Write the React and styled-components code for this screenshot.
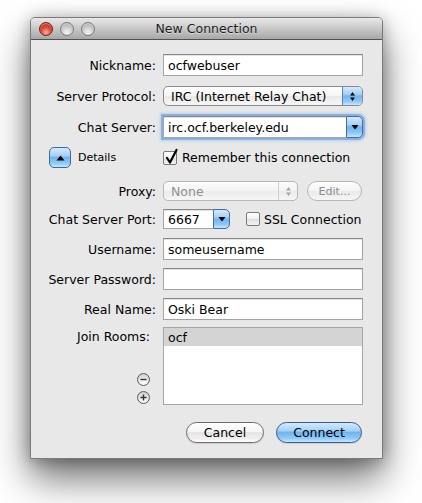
import React from 'react';
import styled, { createGlobalStyle } from 'styled-components';

const Global = createGlobalStyle`
  html, body { margin: 0; padding: 0; background: #fff; }
  body { font-family: "DejaVu Sans", "Liberation Sans", sans-serif; font-size: 12.5px; color: #000; }
`;

const Page = styled.div`
  padding: 17px 0 0 30px;
  height: 503px;
  box-sizing: border-box;
`;

const Window = styled.div`
  width: 353px;
  height: 442px;
  box-sizing: border-box;
  border: 1px solid #7a7a7a;
  border-radius: 5px 5px 0 0;
  background: #e8e8e8;
  box-shadow: 0 20px 38px rgba(0, 0, 0, 0.55), 0 2px 16px rgba(0, 0, 0, 0.3);
  display: flex;
  flex-direction: column;
`;

const TitleBar = styled.div`
  height: 21px;
  border-bottom: 1px solid #515151;
  border-radius: 4px 4px 0 0;
  background: linear-gradient(#e9e9e9, #a7a7a7);
  display: grid;
  grid-template-columns: 1fr auto 1fr;
  align-items: center;
`;

const Lights = styled.div`
  display: flex;
  gap: 7px;
  padding-left: 8px;
`;

const Light = styled.span`
  width: 14px;
  height: 14px;
  border-radius: 50%;
  box-sizing: border-box;
  border: 1px solid ${p => (p.$red ? '#7a1d15' : '#7c7c7c')};
  background: ${p =>
    p.$red
      ? 'radial-gradient(circle at 50% 78%, #fbb3a6 0%, #e0523f 40%, #a8180c 100%)'
      : 'radial-gradient(circle at 50% 78%, #f4f4f4 0%, #cfcfcf 45%, #9b9b9b 100%)'};
  box-shadow: inset 0 1px 1px rgba(255, 255, 255, 0.5);
`;

const Title = styled.div`
  font-size: 12.5px;
  color: #1c1c1c;
  text-shadow: 0 1px 0 rgba(255, 255, 255, 0.45);
`;

const Body = styled.div`
  padding: 14px 19px 0 10px;
  display: flex;
  flex-direction: column;
`;

const Row = styled.div`
  display: grid;
  grid-template-columns: 115px 200px;
  column-gap: 7px;
  align-items: ${p => (p.$top ? 'stretch' : 'center')};
  height: ${p => p.$h}px;
  margin-top: ${p => p.$mt || 0}px;
`;

const Label = styled.div`
  text-align: right;
  white-space: nowrap;
`;

const TextField = styled.div`
  height: 22px;
  box-sizing: border-box;
  border: 1px solid #a4a4a4;
  border-top-color: #868686;
  background: #fff;
  box-shadow: inset 0 1px 0 #e4e4e4;
  padding: 0 4px;
  display: flex;
  align-items: center;
  white-space: nowrap;
`;

const aqua = 'linear-gradient(#d3e9fc 0%, #a5d1f6 40%, #74b4ee 50%, #8ccaf8 80%, #c6e8fe 100%)';

const Popup = styled.div`
  height: 20px;
  width: ${p => p.$w}px;
  box-sizing: border-box;
  border: 1px solid ${p => (p.$disabled ? '#b8b8b8' : '#8a8a8a')};
  border-radius: 5px;
  background: ${p =>
    p.$disabled
      ? 'linear-gradient(#fbfbfb, #f3f3f3 50%, #ebebeb 51%, #f6f6f6)'
      : 'linear-gradient(#ffffff, #f5f5f5 50%, #e8e8e8 51%, #f7f7f7)'};
  color: ${p => (p.$disabled ? '#909090' : '#000')};
  display: flex;
  align-items: stretch;
  overflow: hidden;
`;

const PopupText = styled.div`
  flex: 1;
  display: flex;
  align-items: center;
  padding-left: 7px;
  white-space: nowrap;
`;

const PopupArrows = styled.div`
  width: ${p => p.$w}px;
  display: flex;
  align-items: center;
  justify-content: center;
  background: ${p => (p.$blue ? aqua : 'transparent')};
  border-left: 1px solid ${p => (p.$blue ? '#5a82b4' : '#cfcfcf')};
`;

const Combo = styled.div`
  height: ${p => p.$h}px;
  width: ${p => p.$w}px;
  display: flex;
  box-sizing: border-box;
  border-radius: 0 5px 5px 0;
  box-shadow: ${p => (p.$focus ? '0 0 0 2px rgba(118, 164, 222, 0.75), 0 0 3px 3px rgba(140, 185, 235, 0.5)' : 'none')};
`;

const ComboField = styled(TextField)`
  flex: 1;
  height: 100%;
  border-right: none;
`;

const ComboButton = styled.div`
  width: ${p => p.$w}px;
  box-sizing: border-box;
  border: 1px solid #4a6c9c;
  border-radius: 0 5px 5px 0;
  background: ${aqua};
  display: flex;
  align-items: center;
  justify-content: center;
`;

const Flex = styled.div`
  display: flex;
  align-items: center;
  gap: ${p => p.$gap || 0}px;
`;

const DetailsCell = styled.div`
  display: flex;
  align-items: center;
  padding-left: 8px;
  gap: 7px;
  height: 100%;
`;

const Disclosure = styled.div`
  width: 22px;
  height: 21px;
  box-sizing: border-box;
  border: 1px solid #46679a;
  border-radius: 5px;
  background: ${aqua};
  display: flex;
  align-items: center;
  justify-content: center;
`;

const SmallText = styled.span`
  font-size: 11px;
`;

const CheckWrap = styled.label`
  display: flex;
  align-items: center;
  gap: ${p => p.$gap}px;
  white-space: nowrap;
`;

const Box = styled.span`
  position: relative;
  width: 14px;
  height: 14px;
  box-sizing: border-box;
  border: 1px solid #7a7a7a;
  border-radius: 2px;
  background: linear-gradient(#ffffff, #f0f0f0 50%, #dedede 51%, #f4f4f4);
  flex: none;
`;

const CheckMark = styled.svg`
  position: absolute;
  left: 0;
  top: -3px;
  overflow: visible;
`;

const EditButton = styled.div`
  width: 55px;
  height: 20px;
  box-sizing: border-box;
  border: 1px solid #b6b6b6;
  border-radius: 10px;
  background: linear-gradient(#fdfdfd, #f4f4f4 50%, #e9e9e9 51%, #f6f6f6);
  color: #8d8d8d;
  font-size: 11px;
  display: flex;
  align-items: center;
  justify-content: center;
`;

const LabelStack = styled.div`
  display: flex;
  flex-direction: column;
  align-items: flex-end;
  justify-content: space-between;
  padding: 2px 6px 1px 0;
`;

const RoundButtons = styled.div`
  display: flex;
  flex-direction: column;
  gap: 5px;
`;

const RoundButton = styled.div`
  width: 13px;
  height: 13px;
  box-sizing: border-box;
  border-radius: 50%;
  border: 1px solid #5e5e5e;
  background: radial-gradient(circle at 50% 80%, #ffffff 0%, #e6e6e6 50%, #bdbdbd 100%);
  display: flex;
  align-items: center;
  justify-content: center;
`;

const List = styled.div`
  box-sizing: border-box;
  border: 1px solid #a6a6a6;
  background: #fff;
`;

const ListItem = styled.div`
  height: 18px;
  padding-left: 4px;
  display: flex;
  align-items: center;
  background: ${p => (p.$selected ? '#d4d4d4' : 'transparent')};
`;

const ButtonBar = styled.div`
  display: flex;
  justify-content: flex-end;
  gap: 12px;
  margin-top: 17px;
  padding-right: 1px;
`;

const PushButton = styled.div`
  width: ${p => p.$w}px;
  height: 21px;
  box-sizing: border-box;
  border-radius: 11px;
  border: 1px solid ${p => (p.$primary ? '#3d5a8f' : '#6d6d6d')};
  background: ${p =>
    p.$primary ? aqua : 'linear-gradient(#ffffff 0%, #f6f6f6 45%, #e4e4e4 50%, #f0f0f0 85%, #ffffff 100%)'};
  box-shadow: 0 1px 1px rgba(0, 0, 0, 0.12);
  display: flex;
  align-items: center;
  justify-content: center;
  font-size: 12.5px;
`;

const UpDown = ({ color = '#000' }) => (
  <svg width="7" height="11" viewBox="0 0 7 11">
    <path d="M3.5 1 L6 4.5 L1 4.5 Z" fill={color} />
    <path d="M3.5 10 L6 6.5 L1 6.5 Z" fill={color} />
  </svg>
);

const Down = () => (
  <svg width="8" height="6" viewBox="0 0 8 6">
    <path d="M0.5 1 L7.5 1 L4 5.5 Z" fill="#000" />
  </svg>
);

const Up = () => (
  <svg width="9" height="6" viewBox="0 0 9 6">
    <path d="M4.5 0.5 L8.5 5.5 L0.5 5.5 Z" fill="#000" />
  </svg>
);

const Check = ({ checked }) => (
  <Box>
    {checked && (
      <CheckMark width="14" height="16" viewBox="0 0 14 16">
        <path d="M3 9 L6 13.5 L12.5 1" fill="none" stroke="#000" strokeWidth="2.2" strokeLinecap="round" strokeLinejoin="round" />
      </CheckMark>
    )}
  </Box>
);

export default function App() {
  return (
    <Page>
      <Global />
      <Window>
        <TitleBar>
          <Lights>
            <Light $red />
            <Light />
            <Light />
          </Lights>
          <Title>New Connection</Title>
          <div />
        </TitleBar>
        <Body>
          <Row $h={22}>
            <Label>Nickname:</Label>
            <TextField>ocfwebuser</TextField>
          </Row>
          <Row $h={20} $mt={10}>
            <Label>Server Protocol:</Label>
            <Popup $w={200}>
              <PopupText>IRC (Internet Relay Chat)</PopupText>
              <PopupArrows $w={19} $blue>
                <UpDown />
              </PopupArrows>
            </Popup>
          </Row>
          <Row $h={22} $mt={10}>
            <Label>Chat Server:</Label>
            <Combo $w={200} $h={22} $focus>
              <ComboField>irc.ocf.berkeley.edu</ComboField>
              <ComboButton $w={17}>
                <Down />
              </ComboButton>
            </Combo>
          </Row>
          <Row $h={21} $mt={9}>
            <DetailsCell>
              <Disclosure>
                <Up />
              </Disclosure>
              <SmallText>Details</SmallText>
            </DetailsCell>
            <CheckWrap $gap={5}>
              <Check checked />
              Remember this connection
            </CheckWrap>
          </Row>
          <Row $h={20} $mt={13}>
            <Label>Proxy:</Label>
            <Flex $gap={9}>
              <Popup $w={135} $disabled>
                <PopupText>None</PopupText>
                <PopupArrows $w={18}>
                  <UpDown color="#a6a6a6" />
                </PopupArrows>
              </Popup>
              <EditButton>Edit...</EditButton>
            </Flex>
          </Row>
          <Row $h={20} $mt={8}>
            <Label>Chat Server Port:</Label>
            <Flex $gap={16}>
              <Combo $w={67} $h={20}>
                <ComboField>6667</ComboField>
                <ComboButton $w={17}>
                  <Down />
                </ComboButton>
              </Combo>
              <CheckWrap $gap={4}>
                <Check />
                SSL Connection
              </CheckWrap>
            </Flex>
          </Row>
          <Row $h={22} $mt={9}>
            <Label>Username:</Label>
            <TextField>someusername</TextField>
          </Row>
          <Row $h={22} $mt={8}>
            <Label>Server Password:</Label>
            <TextField />
          </Row>
          <Row $h={22} $mt={8}>
            <Label>Real Name:</Label>
            <TextField>Oski Bear</TextField>
          </Row>
          <Row $h={78} $mt={7} $top>
            <LabelStack>
              <Label>Join Rooms:</Label>
              <RoundButtons>
                <RoundButton>
                  <svg width="7" height="7" viewBox="0 0 7 7">
                    <path d="M0.5 3.5 H6.5" stroke="#333" strokeWidth="1.4" />
                  </svg>
                </RoundButton>
                <RoundButton>
                  <svg width="7" height="7" viewBox="0 0 7 7">
                    <path d="M0.5 3.5 H6.5 M3.5 0.5 V6.5" stroke="#333" strokeWidth="1.4" />
                  </svg>
                </RoundButton>
              </RoundButtons>
            </LabelStack>
            <List>
              <ListItem $selected>ocf</ListItem>
            </List>
          </Row>
          <ButtonBar>
            <PushButton $w={78}>Cancel</PushButton>
            <PushButton $w={86} $primary>
              Connect
            </PushButton>
          </ButtonBar>
        </Body>
      </Window>
    </Page>
  );
}
